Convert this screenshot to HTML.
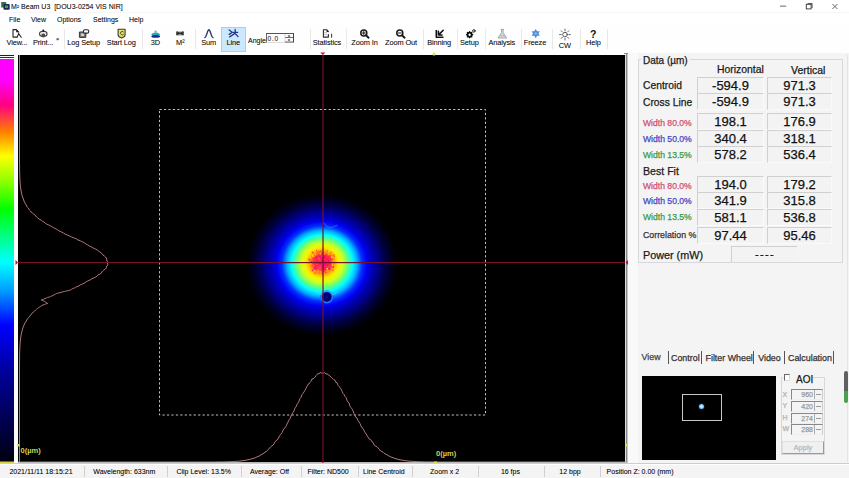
<!DOCTYPE html>
<html><head><meta charset="utf-8">
<style>
*{margin:0;padding:0;box-sizing:border-box}
html,body{width:849px;height:478px;overflow:hidden;background:#f0f0f0;font-family:"Liberation Sans",sans-serif;color:#222}
.a{position:absolute;white-space:pre;line-height:1}
#title{position:absolute;left:0;top:0;width:849px;height:13px;background:#fff}
#menu{position:absolute;left:0;top:13px;width:849px;height:13px;background:#fff}
#tool{position:absolute;left:0;top:26px;width:849px;height:29px;background:#fefefe}
.t7{font-size:7px;color:#1a1a1a;text-shadow:0 0 .3px rgba(0,0,0,.35)}
.lb{width:60px;text-align:center;font-size:7.4px;letter-spacing:-.12px}
.sep{position:absolute;width:1px;background:#e8e8e8}
#view{position:absolute;left:18px;top:55px;width:609px;height:407px;background:#000}
#right .a,#right .vb{-webkit-text-stroke:.25px currentColor}
#rbg{position:absolute;left:627.5px;top:53px;width:221.5px;height:410px;background:linear-gradient(90deg,#f9f9f9 0,#f9f9f9 9.5px,#f4f4f4 9.5px)}
.pb{position:absolute;border-left:1px solid #dadada;border-right:1px solid #e8e8e8}
.gb{position:absolute;border:1px solid #d8d8d8}
.vb{position:absolute;border-top:1px solid #d0d0d0;border-left:1px solid #d0d0d0;border-right:1px solid #fafafa;border-bottom:1px solid #fafafa;font-size:13px;color:#111;text-align:center;line-height:16.5px;background:#f3f3f3}
#status{position:absolute;left:0;top:463px;width:849px;height:15px;background:#f4f4f4;border-top:1px solid #cdcdcd;box-shadow:inset 0 1px 0 #fff}
</style></head><body>
<div id="title">
  <div class="a t7" style="left:11px;top:3px">M² Beam U3  [DOU3-0254 VIS NIR]</div>
  <svg style="position:absolute;left:0;top:0" width="849" height="13" viewBox="0 0 849 13">
    <rect x="1.2" y="2" width="5" height="5.5" fill="#3a6a50"/>
    <rect x="3.5" y="4" width="6.2" height="5.8" rx="1" fill="#1a2a50"/>
    <rect x="5" y="5.5" width="3" height="2.5" fill="#40a060"/>
    <rect x="780" y="5.7" width="6.2" height=".8" fill="#444"/>
    <rect x="806.3" y="4.3" width="4.8" height="4.6" fill="none" stroke="#333" stroke-width=".9"/>
    <path d="M807.6 3.5h4.5v4.6" fill="none" stroke="#333" stroke-width=".8"/>
    <path d="M832.4 4l5 5M837.4 4l-5 5" stroke="#444" stroke-width=".8"/>
    <rect x="0" y="12.3" width="849" height=".7" fill="#f2f2f2"/>
  </svg>
</div>
<div id="menu">
  <div class="a t7" style="left:9px;top:3px">File</div>
  <div class="a t7" style="left:31px;top:3px">View</div>
  <div class="a t7" style="left:57px;top:3px">Options</div>
  <div class="a t7" style="left:93px;top:3px">Settings</div>
  <div class="a t7" style="left:129px;top:3px">Help</div>
</div>
<div id="tool">
<div style="position:absolute;left:221px;top:1px;width:25px;height:25px;background:#cce8ff;border:1px solid #99d1ff"></div>
<div class="a t7 lb" style="margin-top:.3px;left:-13.1px;top:13px">View...</div>
<div class="a t7 lb" style="margin-top:.3px;left:13.1px;top:13px">Print...</div>
<div class="a t7 lb" style="margin-top:.3px;left:53.6px;top:13px">Log Setup</div>
<div class="a t7 lb" style="margin-top:.3px;left:91.3px;top:13px">Start Log</div>
<div class="a t7 lb" style="margin-top:.3px;left:125.3px;top:13px">3D</div>
<div class="a t7 lb" style="margin-top:.3px;left:150.3px;top:13px">M²</div>
<div class="a t7 lb" style="margin-top:.3px;left:178.6px;top:13px">Sum</div>
<div class="a t7 lb" style="margin-top:.3px;left:203.3px;top:13px">Line</div>
<div class="a t7 lb" style="margin-top:.3px;left:296.9px;top:13px">Statistics</div>
<div class="a t7 lb" style="margin-top:.3px;left:334.5px;top:13px">Zoom In</div>
<div class="a t7 lb" style="margin-top:.3px;left:371.0px;top:13px">Zoom Out</div>
<div class="a t7 lb" style="margin-top:.3px;left:409.1px;top:13px">Binning</div>
<div class="a t7 lb" style="margin-top:.3px;left:439.4px;top:13px">Setup</div>
<div class="a t7 lb" style="margin-top:.3px;left:471.8px;top:13px">Analysis</div>
<div class="a t7 lb" style="margin-top:.3px;left:505.0px;top:13px">Freeze</div>
<div class="a t7 lb" style="margin-top:.3px;left:563.3px;top:13px">Help</div>
<div class="a t7 lb" style="margin-top:.3px;left:534.9px;top:16px">CW</div>
<div class="a t7" style="left:248px;top:11px">Angle</div>
<div style="position:absolute;left:265.5px;top:7px;width:28.5px;height:9.5px;background:#fdfdfd;border-top:1px solid #555;border-left:1px solid #666;border-right:1px solid #444;border-bottom:1px solid #ddd"></div>
<div class="a t7" style="left:267.5px;top:10px;font-size:6.5px;letter-spacing:.8px;color:#333">0.0</div>
<svg style="position:absolute;left:284px;top:7px" width="10" height="10" viewBox="0 0 10 10"><path d="M1 4.5h8M1 9h8M5 2v2M5 6v2M3.8 3h2.4M3.8 7h2.4" stroke="#444" stroke-width=".8"/><path d="M1 1v8" stroke="#bbb" stroke-width=".6"/></svg>
<div class="sep" style="left:64px;top:3px;height:20px"></div>
<div class="sep" style="left:142px;top:3px;height:20px"></div>
<div class="sep" style="left:195px;top:3px;height:20px"></div>
<div class="sep" style="left:310px;top:3px;height:20px"></div>
<div class="sep" style="left:346px;top:3px;height:20px"></div>
<div class="sep" style="left:423px;top:3px;height:20px"></div>
<div class="sep" style="left:457px;top:3px;height:20px"></div>
<div class="sep" style="left:485px;top:3px;height:20px"></div>
<div class="sep" style="left:521px;top:3px;height:20px"></div>
<div class="sep" style="left:552px;top:3px;height:20px"></div>
<div class="sep" style="left:580px;top:3px;height:20px"></div>
<div class="sep" style="left:607px;top:3px;height:20px"></div>
</div>
<svg style="position:absolute;left:0;top:0" width="849" height="55" viewBox="0 0 849 55">
<g fill="none" stroke-linecap="round" stroke-linejoin="round">
<!-- View -->
<path d="M13 29.6h3.4l2.3 2.5M13 29.6v7.5h3.6" stroke="#222" stroke-width="1.1"/>
<path d="M16.2 29.7l2.5 2.6h-2.5z" fill="#111"/>
<path d="M17.1 37.3l1.5-3.7l2.6 3.7" stroke="#222" stroke-width="1.1"/>
<!-- Print -->
<rect x="39.6" y="31.5" width="7.4" height="4.6" rx="2.2" stroke="#3a3a3a" stroke-width="1.1" fill="#fff"/>
<circle cx="43.3" cy="30.5" r="1.1" fill="#1a1a1a"/>
<circle cx="43.3" cy="35.4" r="2" fill="#4a4a4a"/>
<path d="M41.2 33.2h4.2" stroke="#aaa" stroke-width=".8"/>
<!-- dropdown -->
<path d="M56.8 38.8h2l-1 1.2z" fill="#222" stroke="#222" stroke-width=".5"/>
<!-- Log setup -->
<rect x="79.8" y="32" width="6" height="5.4" fill="#7a7a7a" stroke="#333" stroke-width="1"/>
<rect x="81.2" y="33.6" width="2.6" height="2.4" fill="#ddd"/>
<rect x="83.5" y="29.7" width="5.2" height="3.4" rx="1.4" fill="#fff" stroke="#2a2a2a" stroke-width="1.1"/>
<!-- Start log -->
<path d="M118.1 29.3h7v5.6q0 1.8-3.5 3q-3.5-1.2-3.5-3z" fill="#e6e46a" stroke="#3a3a30" stroke-width="1.1"/>
<path d="M123.3 31.8q-1.3-1-2.4.2q-1 1.4.3 2.6q1.2.9 2.3-.2" stroke="#3a3a2a" stroke-width=".9"/>
<!-- 3D -->
<path d="M155.7 30l2.2 2.8h-4.4z" fill="#7ac8a0"/>
<ellipse cx="155.7" cy="34.3" rx="4.2" ry="1.6" fill="#27a5c8"/>
<ellipse cx="155.7" cy="36.4" rx="4.4" ry="1.4" fill="#1b2f80"/>
<!-- M2 -->
<path d="M176.8 32.2v2.6l3.2-1.3zM183.2 32.2v2.6l-3.2-1.3z" fill="#2a2a2a" stroke="#2a2a2a" stroke-width="1"/>
<path d="M176.6 32.1h6.8M176.6 34.9h6.8" stroke="#444" stroke-width=".7"/>
<!-- Sum -->
<path d="M204.8 37.6c1.8-.3 2.6-7.9 4.1-7.9s2.3 7.6 4.1 7.9" stroke="#2b3470" stroke-width="1.4"/>
<!-- Line -->
<path d="M229.2 29.9l3.3 2.5h5.1M235.2 29.4v4M229.6 36.9l5.4-3.5l3 3.1M229.1 34.4l2.4-1.5" stroke="#263a8a" stroke-width="1.3"/>
<!-- Statistics -->
<path d="M328.4 34.5v2.6h-5v-7.4h3.2l1.8 1.9" stroke="#2a2a2a" stroke-width="1.1"/>
<path d="M326.6 29.8l1.9 2.1h-1.9z" fill="#111"/>
<path d="M324.6 32.6h2.2M324.6 34.6h2.6" stroke="#aaa" stroke-width=".8"/>
<path d="M331.6 37.3v-3.2" stroke="#444" stroke-width="1.1"/>
<!-- Zoom in/out -->
<circle cx="363.8" cy="33" r="3" stroke="#1a1a1a" stroke-width="1.5"/>
<path d="M362.3 33h3M363.8 31.5v3" stroke="#1a1a1a" stroke-width="1"/>
<path d="M366 35.3l2.6 2.4" stroke="#1a1a1a" stroke-width="1.9"/>
<circle cx="399.8" cy="33" r="3" stroke="#1a1a1a" stroke-width="1.5"/>
<path d="M398.3 33h3" stroke="#1a1a1a" stroke-width="1"/>
<path d="M402 35.3l2.6 2.4" stroke="#1a1a1a" stroke-width="1.9"/>
<!-- Binning -->
<path d="M436.3 30v7.3h7.2" stroke="#111" stroke-width="1.6" stroke-linecap="butt"/>
<path d="M443.2 30.3l-4.4 4.3M438.4 31.4v3.6h3.6" stroke="#111" stroke-width="1.6"/>
<!-- Setup -->
<circle cx="469.6" cy="34.7" r="2.1" stroke="#111" stroke-width="1.8" fill="#fff"/>
<path d="M469.6 31.6v1M469.6 36.8v1M466.5 34.7h1M471.7 34.7h1M467.4 32.5l.7.7M471.1 36.2l.7.7M471.8 32.5l-.7.7M468.1 36.2l-.7.7" stroke="#111" stroke-width="1.3"/>
<circle cx="473.9" cy="30.9" r="1.25" stroke="#222" stroke-width="1"/>
<!-- Analysis -->
<path d="M501 29.4h2.6M501.5 29.6v3l-3.5 5.4h8.6l-3.5-5.4v-3" stroke="#a8a8a8" stroke-width="1" fill="#d8d8d8"/>
<path d="M499.6 35.6h5.4" stroke="#bdbdbd" stroke-width="1.2"/>
<!-- Freeze -->
<path d="M535.7 28.9l1.35 2.35h2.7l-1.35 2.3l1.35 2.3h-2.7l-1.35 2.35l-1.35-2.35h-2.7l1.35-2.3l-1.35-2.3h2.7z" fill="#4d8bd6"/>
<circle cx="535.7" cy="33.55" r="1.3" fill="#8fb8ea"/>
<!-- CW -->
<circle cx="565" cy="34.6" r="2.3" stroke="#555" stroke-width="1"/>
<path d="M565 29.2v1.6M565 38.4v1.6M559.6 34.6h1.6M568.8 34.6h1.6M561.2 30.8l1.1 1.1M567.7 37.3l1.1 1.1M568.8 30.8l-1.1 1.1M562.3 37.3l-1.1 1.1" stroke="#666" stroke-width="1"/>
</g>
<text x="593.3" y="38" font-family="Liberation Sans" font-weight="bold" font-size="10.5" text-anchor="middle" fill="#111">?</text>
</svg>
<svg id="viewsvg" style="position:absolute;left:0;top:0" width="849" height="478" viewBox="0 0 849 478">
<defs>
<linearGradient id="cbar" x1="0" y1="0" x2="0" y2="1">
<stop offset="0" stop-color="#ff00ff"/>
<stop offset="0.052" stop-color="#ff00ff"/>
<stop offset="0.114" stop-color="#ff0080"/>
<stop offset="0.181" stop-color="#ff8000"/>
<stop offset="0.241" stop-color="#ffff00"/>
<stop offset="0.31" stop-color="#80ff00"/>
<stop offset="0.372" stop-color="#00ff00"/>
<stop offset="0.447" stop-color="#00ff90"/>
<stop offset="0.504" stop-color="#00ffff"/>
<stop offset="0.573" stop-color="#00a0ff"/>
<stop offset="0.66" stop-color="#0000ff"/>
<stop offset="0.77" stop-color="#0000a0"/>
<stop offset="0.923" stop-color="#000040"/>
<stop offset="1" stop-color="#000010"/>
</linearGradient>
<radialGradient id="beam" cx="322" cy="265" fx="322" fy="262" r="76" gradientUnits="userSpaceOnUse" gradientTransform="translate(0 265) scale(1 .94) translate(0 -265)">
<stop offset="0.000" stop-color="#ff1060"/>
<stop offset="0.066" stop-color="#ff1a58"/>
<stop offset="0.112" stop-color="#ff3040"/>
<stop offset="0.151" stop-color="#ff8a20"/>
<stop offset="0.191" stop-color="#ffd000"/>
<stop offset="0.224" stop-color="#f4f400"/>
<stop offset="0.276" stop-color="#d0ff20"/>
<stop offset="0.342" stop-color="#60ff80"/>
<stop offset="0.401" stop-color="#00ffff"/>
<stop offset="0.461" stop-color="#00b0ff"/>
<stop offset="0.526" stop-color="#0030ff"/>
<stop offset="0.592" stop-color="#0000f0"/>
<stop offset="0.658" stop-color="#0000b8"/>
<stop offset="0.737" stop-color="#000088"/>
<stop offset="0.816" stop-color="#000050"/>
<stop offset="0.908" stop-color="#000020"/>
<stop offset="1.000" stop-color="#000000"/>
</radialGradient>
<radialGradient id="hole" cx="326.8" cy="297" r="7.2" gradientUnits="userSpaceOnUse">
<stop offset="0" stop-color="#1010a0"/>
<stop offset="0.3" stop-color="#000070"/>
<stop offset="0.6" stop-color="#000080"/>
<stop offset="0.8" stop-color="#2050ff"/>
<stop offset="1" stop-color="#0030ff" stop-opacity="0"/>
</radialGradient>
</defs>
<rect x="0" y="53" width="18" height="410" fill="#fbfbfb"/>
<rect x="0" y="59" width="14" height="403" fill="url(#cbar)"/>
<rect x="0" y="55" width="14" height="1" fill="#101860"/>
<rect x="0" y="57" width="14" height="1" fill="#1c2a80"/>
<rect x="0" y="461.5" width="14" height="1.5" fill="#d8d040"/>
<rect x="18" y="55" width="607" height="407" fill="#000"/>
<rect x="244" y="190" width="156" height="150" fill="url(#beam)"/>
<rect x="327.1" y="255.7" width="1.5" height="1.5" fill="#ff0a50"/><rect x="311.7" y="251.6" width="1.5" height="1.5" fill="#ff3a40"/><rect x="328.4" y="261.3" width="1.5" height="1.5" fill="#ff0a50"/><rect x="316.2" y="257.3" width="1.5" height="1.5" fill="#ff0a50"/><rect x="321.0" y="274.4" width="1.5" height="1.5" fill="#ffa020"/><rect x="321.3" y="250.0" width="1" height="1" fill="#ff2a3a"/><rect x="316.2" y="256.6" width="1" height="1" fill="#ff0a50"/><rect x="314.1" y="255.6" width="1" height="1" fill="#ff6a20"/><rect x="318.5" y="260.7" width="1" height="1" fill="#ff2a60"/><rect x="318.7" y="270.5" width="1" height="1" fill="#ff9a10"/><rect x="325.5" y="254.5" width="1" height="1" fill="#ff2a3a"/><rect x="329.9" y="265.4" width="1.5" height="1.5" fill="#ff2a3a"/><rect x="320.5" y="270.6" width="1.5" height="1.5" fill="#ffe000"/><rect x="311.5" y="256.4" width="2" height="2" fill="#ffe000"/><rect x="321.6" y="274.0" width="1" height="1" fill="#ffe000"/><rect x="322.2" y="270.9" width="1" height="1" fill="#ff1a60"/><rect x="319.5" y="261.0" width="2" height="2" fill="#ff1a70"/><rect x="310.1" y="261.0" width="2" height="2" fill="#ff3a40"/><rect x="319.1" y="267.2" width="1.5" height="1.5" fill="#ff4a80"/><rect x="333.1" y="262.2" width="1.5" height="1.5" fill="#ff3a40"/><rect x="319.3" y="258.7" width="1" height="1" fill="#ff3a50"/><rect x="319.1" y="259.3" width="1.5" height="1.5" fill="#ff4a80"/><rect x="331.6" y="256.2" width="1" height="1" fill="#ff9a10"/><rect x="334.6" y="263.3" width="1" height="1" fill="#ffc000"/><rect x="316.8" y="265.9" width="1" height="1" fill="#ffa020"/><rect x="308.5" y="258.6" width="2" height="2" fill="#ff3a40"/><rect x="328.6" y="252.6" width="1.5" height="1.5" fill="#ffa020"/><rect x="311.7" y="257.7" width="1" height="1" fill="#ff6a20"/><rect x="327.3" y="271.4" width="1" height="1" fill="#ff9a10"/><rect x="323.1" y="263.9" width="1" height="1" fill="#ff0a50"/><rect x="318.5" y="260.1" width="1" height="1" fill="#e80060"/><rect x="326.9" y="250.5" width="1" height="1" fill="#ff3a40"/><rect x="323.5" y="268.7" width="1" height="1" fill="#ff1a60"/><rect x="313.3" y="253.0" width="1" height="1" fill="#ff3a40"/><rect x="322.6" y="256.8" width="1.5" height="1.5" fill="#e80060"/><rect x="317.3" y="267.8" width="1" height="1" fill="#e80060"/><rect x="313.2" y="270.5" width="1.5" height="1.5" fill="#ffa020"/><rect x="319.1" y="263.0" width="1.5" height="1.5" fill="#e80060"/><rect x="310.1" y="259.2" width="1" height="1" fill="#ff9a10"/><rect x="319.0" y="272.3" width="1" height="1" fill="#ff3a50"/><rect x="320.6" y="262.1" width="1" height="1" fill="#ff0090"/><rect x="327.3" y="270.9" width="1" height="1" fill="#ff9a10"/><rect x="328.6" y="267.8" width="2" height="2" fill="#ff0a70"/><rect x="312.9" y="253.1" width="1" height="1" fill="#ffc000"/><rect x="314.5" y="267.5" width="1" height="1" fill="#ff0a70"/><rect x="318.2" y="269.6" width="2" height="2" fill="#ff5a30"/><rect x="314.3" y="268.8" width="1" height="1" fill="#ff3a40"/><rect x="321.8" y="251.8" width="1" height="1" fill="#ffa020"/><rect x="317.4" y="269.1" width="1.5" height="1.5" fill="#ffe000"/><rect x="315.7" y="263.7" width="2" height="2" fill="#ff3a50"/><rect x="318.1" y="267.8" width="1" height="1" fill="#ff2a60"/><rect x="321.7" y="254.8" width="1" height="1" fill="#ff2a60"/><rect x="333.3" y="260.1" width="1" height="1" fill="#ffc000"/><rect x="328.0" y="260.1" width="1" height="1" fill="#e80060"/><rect x="318.1" y="257.0" width="1.5" height="1.5" fill="#ff2a3a"/><rect x="310.5" y="266.8" width="1" height="1" fill="#ff9a10"/><rect x="330.3" y="269.0" width="1" height="1" fill="#ff6a20"/><rect x="323.3" y="252.9" width="2" height="2" fill="#ff9a10"/><rect x="333.3" y="262.2" width="1.5" height="1.5" fill="#ff9a10"/><rect x="311.0" y="255.4" width="2" height="2" fill="#ff0a70"/><rect x="316.0" y="250.3" width="1" height="1" fill="#ff0a70"/><rect x="317.9" y="270.7" width="1" height="1" fill="#ff5a30"/><rect x="318.4" y="249.7" width="1.5" height="1.5" fill="#ff9a10"/><rect x="315.9" y="253.2" width="1.5" height="1.5" fill="#ff9a10"/><rect x="311.8" y="269.7" width="1.5" height="1.5" fill="#ff1a60"/><rect x="326.5" y="270.2" width="2" height="2" fill="#ff9a10"/><rect x="325.7" y="254.7" width="2" height="2" fill="#ff5a30"/><rect x="321.5" y="259.8" width="2" height="2" fill="#e80060"/><rect x="320.8" y="253.6" width="1.5" height="1.5" fill="#ff1a70"/><rect x="330.4" y="257.6" width="1.5" height="1.5" fill="#ffe000"/><rect x="321.1" y="272.9" width="1.5" height="1.5" fill="#ff6a20"/><rect x="310.9" y="255.9" width="2" height="2" fill="#ff3a40"/><rect x="322.4" y="258.2" width="1.5" height="1.5" fill="#ff2a3a"/><rect x="319.2" y="250.7" width="1.5" height="1.5" fill="#ff3a40"/><rect x="322.1" y="247.8" width="1.5" height="1.5" fill="#ff9a10"/><rect x="326.2" y="255.0" width="1.5" height="1.5" fill="#ff3a50"/><rect x="309.8" y="263.1" width="1.5" height="1.5" fill="#ffc000"/><rect x="319.3" y="268.6" width="1" height="1" fill="#ff4a80"/><rect x="313.9" y="270.4" width="1.5" height="1.5" fill="#ffc000"/><rect x="322.6" y="258.5" width="2" height="2" fill="#ff2a3a"/><rect x="312.9" y="252.5" width="1" height="1" fill="#ff6a20"/><rect x="327.3" y="264.8" width="1" height="1" fill="#ff2a60"/><rect x="323.5" y="252.8" width="1" height="1" fill="#ffa020"/><rect x="316.9" y="251.4" width="2" height="2" fill="#ff6a20"/><rect x="328.1" y="251.5" width="1" height="1" fill="#ffe000"/><rect x="308.9" y="257.3" width="1.5" height="1.5" fill="#ff9a10"/><rect x="330.7" y="265.5" width="1" height="1" fill="#ff3a40"/><rect x="321.8" y="273.7" width="1" height="1" fill="#ff6a20"/><rect x="316.2" y="253.0" width="1" height="1" fill="#ff3a40"/><rect x="317.7" y="266.6" width="1" height="1" fill="#ff4a80"/><rect x="322.9" y="262.1" width="2" height="2" fill="#ff0a50"/><rect x="321.9" y="252.3" width="1" height="1" fill="#ff1a70"/><rect x="315.7" y="265.0" width="1.5" height="1.5" fill="#ff0a70"/><rect x="323.0" y="254.0" width="1" height="1" fill="#ffa020"/><rect x="317.2" y="268.0" width="1.5" height="1.5" fill="#ff3a50"/><rect x="312.7" y="261.8" width="2" height="2" fill="#ff3a50"/><rect x="331.2" y="252.1" width="1" height="1" fill="#ff3a40"/><rect x="318.2" y="269.3" width="1" height="1" fill="#ff3a50"/><rect x="314.2" y="253.7" width="1.5" height="1.5" fill="#ffe000"/><rect x="331.3" y="265.2" width="1" height="1" fill="#ff3a50"/><rect x="321.9" y="263.0" width="1" height="1" fill="#ff4a80"/><rect x="331.7" y="255.1" width="1.5" height="1.5" fill="#ffe000"/><rect x="313.8" y="254.1" width="1" height="1" fill="#ff6a20"/><rect x="319.6" y="259.9" width="1" height="1" fill="#ff4a80"/><rect x="323.4" y="266.0" width="1" height="1" fill="#ff0a70"/><rect x="324.7" y="253.9" width="2" height="2" fill="#ff3a50"/><rect x="328.9" y="252.8" width="1.5" height="1.5" fill="#ff6a20"/><rect x="312.0" y="256.8" width="1.5" height="1.5" fill="#ff6a20"/><rect x="331.5" y="264.3" width="1.5" height="1.5" fill="#ffe000"/><rect x="330.3" y="262.3" width="2" height="2" fill="#ff3a40"/><rect x="331.0" y="257.4" width="2" height="2" fill="#ff3a40"/><rect x="318.7" y="258.5" width="1" height="1" fill="#ff1a70"/><rect x="326.2" y="266.5" width="1" height="1" fill="#ff2a60"/><rect x="320.9" y="252.4" width="1.5" height="1.5" fill="#ff1a60"/><rect x="318.4" y="258.8" width="1.5" height="1.5" fill="#ff4a80"/><rect x="330.2" y="258.1" width="1" height="1" fill="#ff0a70"/><rect x="322.5" y="261.6" width="2" height="2" fill="#ff0a70"/><rect x="319.5" y="265.2" width="2" height="2" fill="#ff0090"/><rect x="318.9" y="264.3" width="1.5" height="1.5" fill="#ff2a60"/><rect x="326.1" y="270.1" width="1.5" height="1.5" fill="#ff9a10"/><rect x="322.9" y="252.2" width="1.5" height="1.5" fill="#ff5a30"/><rect x="309.9" y="256.7" width="1.5" height="1.5" fill="#ffe000"/><rect x="322.3" y="263.2" width="1.5" height="1.5" fill="#ff1a70"/><rect x="315.0" y="267.9" width="1.5" height="1.5" fill="#ff2a3a"/><rect x="329.0" y="262.1" width="1" height="1" fill="#ffa020"/><rect x="326.3" y="267.8" width="1" height="1" fill="#ffa020"/><rect x="325.6" y="255.9" width="1.5" height="1.5" fill="#ff5a30"/><rect x="311.3" y="259.2" width="1.5" height="1.5" fill="#ff5a30"/><rect x="321.5" y="255.7" width="1" height="1" fill="#ffa020"/><rect x="310.0" y="264.2" width="1.5" height="1.5" fill="#ff9a10"/><rect x="332.0" y="262.4" width="1.5" height="1.5" fill="#ffa020"/><rect x="329.5" y="255.1" width="2" height="2" fill="#ff3a40"/><rect x="325.5" y="272.0" width="1" height="1" fill="#ff2a3a"/><rect x="319.2" y="255.8" width="2" height="2" fill="#ff0090"/><rect x="329.3" y="266.2" width="2" height="2" fill="#ff3a50"/><rect x="320.5" y="263.9" width="2" height="2" fill="#ff1a70"/><rect x="312.3" y="257.8" width="1.5" height="1.5" fill="#ff3a50"/><rect x="329.9" y="258.7" width="1.5" height="1.5" fill="#ff2a3a"/><rect x="314.4" y="272.7" width="1.5" height="1.5" fill="#ff2a3a"/><rect x="325.1" y="263.0" width="1.5" height="1.5" fill="#ff0090"/><rect x="332.5" y="254.2" width="2" height="2" fill="#ff6a20"/><rect x="330.9" y="256.2" width="2" height="2" fill="#ffc000"/><rect x="326.7" y="265.1" width="2" height="2" fill="#ff4a80"/><rect x="313.2" y="264.8" width="1" height="1" fill="#ff9a10"/><rect x="321.4" y="264.7" width="1" height="1" fill="#ff3a50"/><rect x="318.4" y="250.0" width="1" height="1" fill="#ff3a40"/><rect x="319.4" y="265.8" width="1.5" height="1.5" fill="#ff4a80"/><rect x="311.2" y="265.6" width="1.5" height="1.5" fill="#ff6a20"/><rect x="320.9" y="269.7" width="1.5" height="1.5" fill="#ff2a3a"/><rect x="325.8" y="267.4" width="1" height="1" fill="#ff0a70"/><rect x="329.7" y="257.0" width="1" height="1" fill="#ff2a3a"/><rect x="330.3" y="251.7" width="1.5" height="1.5" fill="#ff9a10"/><rect x="333.5" y="255.6" width="1.5" height="1.5" fill="#ff6a20"/><rect x="326.6" y="266.5" width="1" height="1" fill="#ff4a80"/><rect x="315.6" y="263.5" width="1.5" height="1.5" fill="#ff2a3a"/><rect x="319.7" y="274.5" width="2" height="2" fill="#ffc000"/><rect x="314.8" y="272.8" width="1.5" height="1.5" fill="#ff9a10"/><rect x="317.4" y="270.9" width="1" height="1" fill="#ffe000"/><rect x="323.6" y="250.7" width="2" height="2" fill="#ff9a10"/><rect x="319.1" y="271.2" width="1.5" height="1.5" fill="#ff3a50"/><rect x="332.3" y="269.5" width="1.5" height="1.5" fill="#ff6a20"/><rect x="317.6" y="257.4" width="2" height="2" fill="#ff5a30"/><rect x="326.5" y="268.1" width="1.5" height="1.5" fill="#ffe000"/><rect x="316.0" y="264.4" width="1" height="1" fill="#ff5a30"/><rect x="324.6" y="268.7" width="1" height="1" fill="#ff2a3a"/><rect x="326.5" y="264.5" width="2" height="2" fill="#ff0a50"/><rect x="321.8" y="249.6" width="2" height="2" fill="#ff9a10"/><rect x="328.8" y="262.0" width="2" height="2" fill="#ff0a70"/><rect x="319.7" y="252.9" width="1.5" height="1.5" fill="#ffc000"/><rect x="331.3" y="263.0" width="1" height="1" fill="#ffc000"/><rect x="324.5" y="256.7" width="1" height="1" fill="#e80060"/><rect x="317.3" y="265.8" width="1.5" height="1.5" fill="#ff2a60"/><rect x="321.3" y="269.9" width="2" height="2" fill="#ff3a40"/><rect x="332.5" y="266.3" width="1.5" height="1.5" fill="#ff1a60"/><rect x="330.7" y="263.5" width="1" height="1" fill="#ff2a3a"/><rect x="324.0" y="267.8" width="1.5" height="1.5" fill="#ff0a50"/><rect x="324.4" y="255.6" width="1" height="1" fill="#ff0a70"/><rect x="324.7" y="255.4" width="2" height="2" fill="#ff0a70"/><rect x="322.2" y="271.5" width="1" height="1" fill="#ff1a60"/><rect x="323.1" y="263.6" width="2" height="2" fill="#ff0090"/><rect x="319.2" y="271.2" width="2" height="2" fill="#ff9a10"/><rect x="327.9" y="253.2" width="2" height="2" fill="#ff9a10"/><rect x="313.7" y="267.5" width="1.5" height="1.5" fill="#ff0a70"/><rect x="311.4" y="254.8" width="2" height="2" fill="#ffe000"/><rect x="324.1" y="261.5" width="1" height="1" fill="#ff0090"/><rect x="318.5" y="249.2" width="1.5" height="1.5" fill="#ffe000"/><rect x="315.3" y="265.3" width="1" height="1" fill="#ff2a60"/><rect x="318.1" y="263.5" width="1" height="1" fill="#ff2a60"/><rect x="315.7" y="265.2" width="1" height="1" fill="#ff0090"/>
<circle cx="326.8" cy="297" r="7.2" fill="url(#hole)"/>
<circle cx="326.8" cy="297" r="5.6" stroke="#3a90ff" stroke-width="1.2" fill="none" opacity=".7"/>
<path d="M321 295a6.2 6.2 0 0 1 11.6 0" stroke="#60e0ff" stroke-width="1.1" fill="none" opacity=".5"/>
<path d="M316 292.5q3 2 4.5 2M333.3 294.5q2-1 5-3" stroke="#60d8ff" stroke-width="1" fill="none" opacity=".5"/>
<path d="M323.5 222.5Q328 231 337.5 225" stroke="#5a8aff" stroke-width="1" fill="none" opacity=".55"/>
<rect x="159.5" y="109.5" width="326" height="305.5" fill="none" stroke="#c4c4c4" stroke-width="1" stroke-dasharray="2.2 2.25"/>
<path d="M19.5 55.0 L19.5 56.0 L19.5 57.0 L19.5 58.0 L19.5 59.0 L19.5 60.0 L19.5 61.0 L19.5 62.0 L19.5 63.0 L19.5 64.0 L19.5 65.0 L19.5 66.0 L19.5 67.0 L19.5 68.0 L19.5 69.0 L19.5 70.0 L19.5 71.0 L19.5 72.0 L19.5 73.0 L19.5 74.0 L19.5 75.0 L19.5 76.0 L19.5 77.0 L19.5 78.0 L19.5 79.0 L19.5 80.0 L19.5 81.0 L19.5 82.0 L19.5 83.0 L19.5 84.0 L19.5 85.0 L19.5 86.0 L19.5 87.0 L19.5 88.0 L19.5 89.0 L19.5 90.0 L19.5 91.0 L19.5 92.0 L19.5 93.0 L19.5 94.0 L19.5 95.0 L19.5 96.0 L19.5 97.0 L19.5 98.0 L19.5 99.0 L19.5 100.0 L19.5 101.0 L19.5 102.0 L19.5 103.0 L19.5 104.0 L19.5 105.0 L19.5 106.0 L19.5 107.0 L19.5 108.0 L19.5 109.0 L19.5 110.0 L19.5 111.0 L19.5 112.0 L19.5 113.0 L19.5 114.0 L19.5 115.0 L19.5 116.0 L19.5 117.0 L19.5 118.0 L19.5 119.0 L19.5 120.0 L19.5 121.0 L19.5 122.0 L19.5 123.0 L19.5 124.0 L19.5 125.0 L19.5 126.0 L19.5 127.0 L19.5 128.0 L19.5 129.0 L19.5 130.0 L19.5 131.0 L19.5 132.0 L19.5 133.0 L19.5 134.0 L19.5 135.0 L19.5 136.0 L19.5 137.0 L19.5 138.0 L19.5 139.0 L19.5 140.0 L19.5 141.0 L19.5 142.0 L19.5 143.0 L19.5 144.0 L19.5 145.0 L19.5 146.0 L19.5 147.0 L19.5 148.0 L19.5 149.0 L19.5 150.0 L19.5 151.0 L19.5 152.0 L19.5 153.0 L19.5 154.0 L19.5 155.0 L19.5 156.0 L19.5 157.0 L19.5 158.0 L19.5 159.0 L19.5 160.0 L19.5 161.0 L19.5 162.0 L19.5 163.0 L19.5 164.0 L19.6 165.0 L19.6 166.0 L19.6 167.0 L19.6 168.0 L19.6 169.0 L19.6 170.0 L19.6 171.0 L19.7 172.0 L19.7 173.0 L19.7 174.0 L19.7 175.0 L19.8 176.0 L19.8 177.0 L19.8 178.0 L19.9 179.0 L19.9 180.0 L20.0 181.0 L20.1 182.0 L20.1 183.0 L20.2 184.0 L20.3 185.0 L20.4 186.0 L20.5 187.0 L20.7 188.0 L20.8 189.0 L21.0 190.0 L21.1 191.0 L21.3 192.0 L21.5 193.0 L21.7 194.0 L22.0 195.0 L22.2 196.0 L22.7 197.0 L23.0 198.0 L23.3 199.0 L23.7 200.0 L24.0 201.0 L24.4 202.0 L25.0 203.0 L25.5 204.0 L26.3 205.0 L26.6 206.0 L27.2 207.0 L28.3 208.0 L28.9 209.0 L29.4 210.0 L30.5 211.0 L31.1 212.0 L32.4 213.0 L33.8 214.0 L34.8 215.0 L35.8 216.0 L36.5 217.0 L37.9 218.0 L39.0 219.0 L41.1 220.0 L42.2 221.0 L44.0 222.0 L45.0 223.0 L46.5 224.0 L48.9 225.0 L50.8 226.0 L52.4 227.0 L54.2 228.0 L56.1 229.0 L57.9 230.0 L59.2 231.0 L61.6 232.0 L63.4 233.0 L65.0 234.0 L67.1 235.0 L69.5 236.0 L71.5 237.0 L74.2 238.0 L76.6 239.0 L78.0 240.0 L80.7 241.0 L82.8 242.0 L84.7 243.0 L86.0 244.0 L87.8 245.0 L89.6 246.0 L91.4 247.0 L93.2 248.0 L95.3 249.0 L97.3 250.0 L98.7 251.0 L99.7 252.0 L101.2 253.0 L102.5 254.0 L102.8 255.0 L104.4 256.0 L105.6 257.0 L106.2 258.0 L106.7 259.0 L106.9 260.0 L106.8 261.0 L107.8 262.0 L107.3 263.0 L107.8 264.0 L107.8 265.0 L106.8 266.0 L106.3 267.0 L106.4 268.0 L105.4 269.0 L103.9 270.0 L102.8 271.0 L101.8 272.0 L101.5 273.0 L100.0 274.0 L97.9 275.0 L97.2 276.0 L95.8 277.0 L93.7 278.0 L91.6 279.0 L90.0 280.0 L87.7 281.0 L85.6 282.0 L84.8 283.0 L82.4 284.0 L80.2 285.0 L78.6 286.0 L75.9 287.0 L75.4 287.5 L74.3 288.0 L72.8 288.5 L72.0 289.0 L71.3 289.5 L70.4 290.0 L68.8 290.5 L66.4 291.0 L64.5 291.5 L62.2 292.0 L61.1 292.5 L58.4 293.0 L56.5 293.5 L55.6 294.0 L55.0 294.5 L53.4 295.0 L53.1 295.5 L51.6 296.0 L50.7 296.5 L49.3 297.0 L47.4 297.5 L46.7 298.0 L45.1 298.5 L43.6 299.0 L43.3 299.5 L41.3 300.0 L42.7 300.5 L44.0 301.0 L44.8 301.5 L45.6 302.0 L46.4 302.5 L46.9 303.0 L47.8 303.5 L45.5 304.0 L44.6 304.5 L42.9 305.0 L41.9 305.5 L41.6 306.0 L40.3 306.5 L39.4 307.0 L39.0 307.5 L38.5 308.0 L37.4 308.5 L36.9 309.0 L36.2 309.5 L35.6 310.0 L34.6 311.0 L33.3 312.0 L32.4 313.0 L31.4 314.0 L30.8 315.0 L29.8 316.0 L29.1 317.0 L28.3 318.0 L27.3 319.0 L26.8 320.0 L26.3 321.0 L25.7 322.0 L24.9 323.0 L24.4 324.0 L24.1 325.0 L23.6 326.0 L23.2 327.0 L22.8 328.0 L22.6 329.0 L22.3 330.0 L22.1 331.0 L21.7 332.0 L21.6 333.0 L21.3 334.0 L21.1 335.0 L21.0 336.0 L20.8 337.0 L20.6 338.0 L20.6 339.0 L20.4 340.0 L20.3 341.0 L20.2 342.0 L20.2 343.0 L20.1 344.0 L20.0 345.0 L19.9 346.0 L19.9 347.0 L19.8 348.0 L19.8 349.0 L19.8 350.0 L19.7 351.0 L19.7 352.0 L19.7 353.0 L19.6 354.0 L19.6 355.0 L19.6 356.0 L19.6 357.0 L19.6 358.0 L19.6 359.0 L19.6 360.0 L19.6 361.0 L19.5 362.0 L19.5 363.0 L19.5 364.0 L19.5 365.0 L19.5 366.0 L19.5 367.0 L19.5 368.0 L19.5 369.0 L19.5 370.0 L19.5 371.0 L19.5 372.0 L19.5 373.0 L19.5 374.0 L19.5 375.0 L19.5 376.0 L19.5 377.0 L19.5 378.0 L19.5 379.0 L19.5 380.0 L19.5 381.0 L19.5 382.0 L19.5 383.0 L19.5 384.0 L19.5 385.0 L19.5 386.0 L19.5 387.0 L19.5 388.0 L19.5 389.0 L19.5 390.0 L19.5 391.0 L19.5 392.0 L19.5 393.0 L19.5 394.0 L19.5 395.0 L19.5 396.0 L19.5 397.0 L19.5 398.0 L19.5 399.0 L19.5 400.0 L19.5 401.0 L19.5 402.0 L19.5 403.0 L19.5 404.0 L19.5 405.0 L19.5 406.0 L19.5 407.0 L19.5 408.0 L19.5 409.0 L19.5 410.0 L19.5 411.0 L19.5 412.0 L19.5 413.0 L19.5 414.0 L19.5 415.0 L19.5 416.0 L19.5 417.0 L19.5 418.0 L19.5 419.0 L19.5 420.0 L19.5 421.0 L19.5 422.0 L19.5 423.0 L19.5 424.0 L19.5 425.0 L19.5 426.0 L19.5 427.0 L19.5 428.0 L19.5 429.0 L19.5 430.0 L19.5 431.0 L19.5 432.0 L19.5 433.0 L19.5 434.0 L19.5 435.0 L19.5 436.0 L19.5 437.0 L19.5 438.0 L19.5 439.0 L19.5 440.0 L19.5 441.0 L19.5 442.0 L19.5 443.0 L19.5 444.0 L19.5 445.0 L19.5 446.0 L19.5 447.0 L19.5 448.0 L19.5 449.0 L19.5 450.0 L19.5 451.0 L19.5 452.0 L19.5 453.0 L19.5 454.0 L19.5 455.0 L19.5 456.0 L19.5 457.0 L19.5 458.0 L19.5 459.0 L19.5 460.0 L19.5 461.0 L19.5 462.0" fill="none" stroke="#b07878" stroke-width="1"/>
<path d="M18.0 462.0 L19.0 462.0 L20.0 462.0 L21.0 462.0 L22.0 462.0 L23.0 462.0 L24.0 462.0 L25.0 462.0 L26.0 462.0 L27.0 462.0 L28.0 462.0 L29.0 462.0 L30.0 462.0 L31.0 462.0 L32.0 462.0 L33.0 462.0 L34.0 462.0 L35.0 462.0 L36.0 462.0 L37.0 462.0 L38.0 462.0 L39.0 462.0 L40.0 462.0 L41.0 462.0 L42.0 462.0 L43.0 462.0 L44.0 462.0 L45.0 462.0 L46.0 462.0 L47.0 462.0 L48.0 462.0 L49.0 462.0 L50.0 462.0 L51.0 462.0 L52.0 462.0 L53.0 462.0 L54.0 462.0 L55.0 462.0 L56.0 462.0 L57.0 462.0 L58.0 462.0 L59.0 462.0 L60.0 462.0 L61.0 462.0 L62.0 462.0 L63.0 462.0 L64.0 462.0 L65.0 462.0 L66.0 462.0 L67.0 462.0 L68.0 462.0 L69.0 462.0 L70.0 462.0 L71.0 462.0 L72.0 462.0 L73.0 462.0 L74.0 462.0 L75.0 462.0 L76.0 462.0 L77.0 462.0 L78.0 462.0 L79.0 462.0 L80.0 462.0 L81.0 462.0 L82.0 462.0 L83.0 462.0 L84.0 462.0 L85.0 462.0 L86.0 462.0 L87.0 462.0 L88.0 462.0 L89.0 462.0 L90.0 462.0 L91.0 462.0 L92.0 462.0 L93.0 462.0 L94.0 462.0 L95.0 462.0 L96.0 462.0 L97.0 462.0 L98.0 462.0 L99.0 462.0 L100.0 462.0 L101.0 462.0 L102.0 462.0 L103.0 462.0 L104.0 462.0 L105.0 462.0 L106.0 462.0 L107.0 462.0 L108.0 462.0 L109.0 462.0 L110.0 462.0 L111.0 462.0 L112.0 462.0 L113.0 462.0 L114.0 462.0 L115.0 462.0 L116.0 462.0 L117.0 462.0 L118.0 462.0 L119.0 462.0 L120.0 462.0 L121.0 462.0 L122.0 462.0 L123.0 462.0 L124.0 462.0 L125.0 462.0 L126.0 462.0 L127.0 462.0 L128.0 462.0 L129.0 462.0 L130.0 462.0 L131.0 462.0 L132.0 462.0 L133.0 462.0 L134.0 462.0 L135.0 462.0 L136.0 462.0 L137.0 462.0 L138.0 462.0 L139.0 462.0 L140.0 462.0 L141.0 462.0 L142.0 462.0 L143.0 462.0 L144.0 462.0 L145.0 462.0 L146.0 462.0 L147.0 462.0 L148.0 462.0 L149.0 462.0 L150.0 462.0 L151.0 462.0 L152.0 462.0 L153.0 462.0 L154.0 462.0 L155.0 462.0 L156.0 462.0 L157.0 462.0 L158.0 462.0 L159.0 462.0 L160.0 462.0 L161.0 462.0 L162.0 462.0 L163.0 462.0 L164.0 462.0 L165.0 462.0 L166.0 462.0 L167.0 462.0 L168.0 462.0 L169.0 462.0 L170.0 462.0 L171.0 462.0 L172.0 462.0 L173.0 462.0 L174.0 462.0 L175.0 462.0 L176.0 462.0 L177.0 462.0 L178.0 462.0 L179.0 462.0 L180.0 462.0 L181.0 462.0 L182.0 462.0 L183.0 462.0 L184.0 462.0 L185.0 462.0 L186.0 462.0 L187.0 462.0 L188.0 462.0 L189.0 462.0 L190.0 462.0 L191.0 462.0 L192.0 462.0 L193.0 462.0 L194.0 462.0 L195.0 462.0 L196.0 462.0 L197.0 462.0 L198.0 462.0 L199.0 462.0 L200.0 462.0 L201.0 462.0 L202.0 462.0 L203.0 462.0 L204.0 462.0 L205.0 462.0 L206.0 462.0 L207.0 462.0 L208.0 462.0 L209.0 462.0 L210.0 462.0 L211.0 462.0 L212.0 462.0 L213.0 462.0 L214.0 462.0 L215.0 462.0 L216.0 462.0 L217.0 461.9 L218.0 461.9 L219.0 461.9 L220.0 461.9 L221.0 461.9 L222.0 461.9 L223.0 461.9 L224.0 461.9 L225.0 461.8 L226.0 461.8 L227.0 461.8 L228.0 461.8 L229.0 461.7 L230.0 461.7 L231.0 461.7 L232.0 461.6 L233.0 461.6 L234.0 461.5 L235.0 461.4 L236.0 461.4 L237.0 461.3 L238.0 461.2 L239.0 461.2 L240.0 461.1 L241.0 460.9 L242.0 460.8 L243.0 460.6 L244.0 460.5 L245.0 460.4 L246.0 460.2 L247.0 460.0 L248.0 459.8 L249.0 459.6 L250.0 459.3 L251.0 459.1 L252.0 458.7 L253.0 458.4 L254.0 458.2 L255.0 457.9 L256.0 457.4 L257.0 456.9 L258.0 456.4 L259.0 456.1 L260.0 455.6 L261.0 454.9 L262.0 454.2 L263.0 453.7 L264.0 453.1 L265.0 452.2 L266.0 451.8 L267.0 450.8 L268.0 449.8 L269.0 448.4 L270.0 447.8 L271.0 446.5 L272.0 445.9 L273.0 445.1 L274.0 443.9 L275.0 441.7 L276.0 440.8 L277.0 440.0 L278.0 439.1 L279.0 437.0 L280.0 435.2 L281.0 434.1 L282.0 432.7 L283.0 430.5 L284.0 428.5 L285.0 427.8 L286.0 426.3 L287.0 424.1 L288.0 422.1 L289.0 419.9 L290.0 418.7 L291.0 416.0 L292.0 414.1 L293.0 412.5 L294.0 411.0 L295.0 407.9 L296.0 406.9 L297.0 404.2 L298.0 403.1 L299.0 401.2 L300.0 398.5 L301.0 397.3 L302.0 394.5 L303.0 393.3 L304.0 392.0 L305.0 390.2 L306.0 388.3 L307.0 386.3 L308.0 384.4 L309.0 384.0 L310.0 382.3 L311.0 381.2 L312.0 378.9 L313.0 379.0 L314.0 378.1 L315.0 377.1 L316.0 375.8 L317.0 374.4 L318.0 373.8 L319.0 373.5 L320.0 372.8 L321.0 372.6 L322.0 373.3 L323.0 373.4 L324.0 372.5 L325.0 372.9 L326.0 374.2 L327.0 373.7 L328.0 374.6 L329.0 375.3 L330.0 376.0 L331.0 377.1 L332.0 378.2 L333.0 378.8 L334.0 379.8 L335.0 380.2 L336.0 382.6 L337.0 382.7 L338.0 385.2 L339.0 386.5 L340.0 387.4 L341.0 389.0 L342.0 391.2 L343.0 393.4 L344.0 394.5 L345.0 396.5 L346.0 397.5 L347.0 400.4 L348.0 402.0 L349.0 403.1 L350.0 406.2 L351.0 407.6 L352.0 408.9 L353.0 410.9 L354.0 413.8 L355.0 415.6 L356.0 417.5 L357.0 418.1 L358.0 420.8 L359.0 421.9 L360.0 423.5 L361.0 426.0 L362.0 427.8 L363.0 428.4 L364.0 430.5 L365.0 432.6 L366.0 433.5 L367.0 435.5 L368.0 437.0 L369.0 438.8 L370.0 439.1 L371.0 440.1 L372.0 441.8 L373.0 442.5 L374.0 444.9 L375.0 445.7 L376.0 446.4 L377.0 446.9 L378.0 447.9 L379.0 449.4 L380.0 450.3 L381.0 451.0 L382.0 451.7 L383.0 452.2 L384.0 453.3 L385.0 453.6 L386.0 454.3 L387.0 454.8 L388.0 455.4 L389.0 456.0 L390.0 456.5 L391.0 457.0 L392.0 457.4 L393.0 457.6 L394.0 458.2 L395.0 458.5 L396.0 458.7 L397.0 459.1 L398.0 459.3 L399.0 459.6 L400.0 459.7 L401.0 460.0 L402.0 460.1 L403.0 460.3 L404.0 460.4 L405.0 460.6 L406.0 460.8 L407.0 460.9 L408.0 461.0 L409.0 461.1 L410.0 461.2 L411.0 461.3 L412.0 461.3 L413.0 461.4 L414.0 461.5 L415.0 461.5 L416.0 461.6 L417.0 461.6 L418.0 461.7 L419.0 461.7 L420.0 461.7 L421.0 461.8 L422.0 461.8 L423.0 461.8 L424.0 461.8 L425.0 461.9 L426.0 461.9 L427.0 461.9 L428.0 461.9 L429.0 461.9 L430.0 461.9 L431.0 461.9 L432.0 461.9 L433.0 461.9 L434.0 462.0 L435.0 462.0 L436.0 462.0 L437.0 462.0 L438.0 462.0 L439.0 462.0 L440.0 462.0 L441.0 462.0 L442.0 462.0 L443.0 462.0 L444.0 462.0 L445.0 462.0 L446.0 462.0 L447.0 462.0 L448.0 462.0 L449.0 462.0 L450.0 462.0 L451.0 462.0 L452.0 462.0 L453.0 462.0 L454.0 462.0 L455.0 462.0 L456.0 462.0 L457.0 462.0 L458.0 462.0 L459.0 462.0 L460.0 462.0 L461.0 462.0 L462.0 462.0 L463.0 462.0 L464.0 462.0 L465.0 462.0 L466.0 462.0 L467.0 462.0 L468.0 462.0 L469.0 462.0 L470.0 462.0 L471.0 462.0 L472.0 462.0 L473.0 462.0 L474.0 462.0 L475.0 462.0 L476.0 462.0 L477.0 462.0 L478.0 462.0 L479.0 462.0 L480.0 462.0 L481.0 462.0 L482.0 462.0 L483.0 462.0 L484.0 462.0 L485.0 462.0 L486.0 462.0 L487.0 462.0 L488.0 462.0 L489.0 462.0 L490.0 462.0 L491.0 462.0 L492.0 462.0 L493.0 462.0 L494.0 462.0 L495.0 462.0 L496.0 462.0 L497.0 462.0 L498.0 462.0 L499.0 462.0 L500.0 462.0 L501.0 462.0 L502.0 462.0 L503.0 462.0 L504.0 462.0 L505.0 462.0 L506.0 462.0 L507.0 462.0 L508.0 462.0 L509.0 462.0 L510.0 462.0 L511.0 462.0 L512.0 462.0 L513.0 462.0 L514.0 462.0 L515.0 462.0 L516.0 462.0 L517.0 462.0 L518.0 462.0 L519.0 462.0 L520.0 462.0 L521.0 462.0 L522.0 462.0 L523.0 462.0 L524.0 462.0 L525.0 462.0 L526.0 462.0 L527.0 462.0 L528.0 462.0 L529.0 462.0 L530.0 462.0 L531.0 462.0 L532.0 462.0 L533.0 462.0 L534.0 462.0 L535.0 462.0 L536.0 462.0 L537.0 462.0 L538.0 462.0 L539.0 462.0 L540.0 462.0 L541.0 462.0 L542.0 462.0 L543.0 462.0 L544.0 462.0 L545.0 462.0 L546.0 462.0 L547.0 462.0 L548.0 462.0 L549.0 462.0 L550.0 462.0 L551.0 462.0 L552.0 462.0 L553.0 462.0 L554.0 462.0 L555.0 462.0 L556.0 462.0 L557.0 462.0 L558.0 462.0 L559.0 462.0 L560.0 462.0 L561.0 462.0 L562.0 462.0 L563.0 462.0 L564.0 462.0 L565.0 462.0 L566.0 462.0 L567.0 462.0 L568.0 462.0 L569.0 462.0 L570.0 462.0 L571.0 462.0 L572.0 462.0 L573.0 462.0 L574.0 462.0 L575.0 462.0 L576.0 462.0 L577.0 462.0 L578.0 462.0 L579.0 462.0 L580.0 462.0 L581.0 462.0 L582.0 462.0 L583.0 462.0 L584.0 462.0 L585.0 462.0 L586.0 462.0 L587.0 462.0 L588.0 462.0 L589.0 462.0 L590.0 462.0 L591.0 462.0 L592.0 462.0 L593.0 462.0 L594.0 462.0 L595.0 462.0 L596.0 462.0 L597.0 462.0 L598.0 462.0 L599.0 462.0 L600.0 462.0 L601.0 462.0 L602.0 462.0 L603.0 462.0 L604.0 462.0 L605.0 462.0 L606.0 462.0 L607.0 462.0 L608.0 462.0 L609.0 462.0 L610.0 462.0 L611.0 462.0 L612.0 462.0 L613.0 462.0 L614.0 462.0 L615.0 462.0 L616.0 462.0 L617.0 462.0 L618.0 462.0 L619.0 462.0 L620.0 462.0 L621.0 462.0 L622.0 462.0 L623.0 462.0 L624.0 462.0 L625.0 462.0" fill="none" stroke="#b07878" stroke-width="1"/>
<rect x="18" y="262" width="607" height="1.2" fill="#74122a"/>
<rect x="322.4" y="55" width="1.2" height="407" fill="#74122a"/>
<rect x="625.8" y="53" width="1.6" height="410" fill="#8a8a8a"/><rect x="624" y="53" width="5" height="1" fill="#8a8a8a"/>
<rect x="18" y="462" width="609" height="1.5" fill="#b8b8b8"/>
<text x="20.5" y="453" font-family="Liberation Sans" font-weight="bold" font-size="7.5" fill="#d0d050">0(µm)</text>
<text x="436" y="456" font-family="Liberation Sans" font-weight="bold" font-size="7.5" fill="#d0d050">0(µm)</text>
<path d="M322.8 55l-2.5-2.5h5z" fill="#c01030"/>
<path d="M322.8 462l-2.5 2h5z" fill="#c01030"/>
<path d="M18 262.6l-2.5-2.5v5z" fill="#c01030"/>
<path d="M625.5 262.6l2.5-2.5v5z" fill="#c01030"/>
<rect x="432.5" y="52.5" width="3" height="3" rx="1" fill="#e8e860"/>
<rect x="17" y="444" width="2.5" height="2.5" fill="#e0e040"/>
<rect x="625" y="444" width="2.5" height="2.5" fill="#e0e040"/>
<rect x="434" y="461.5" width="3" height="2" fill="#e0e040"/>
</svg>
<div id="right">
<div id="rbg"></div>
<div style="position:absolute;left:847px;top:55px;width:1px;height:407px;background:#e4e4e4"></div>
<div class="gb" style="left:638px;top:59px;width:205px;height:203.5px"></div>
<div class="a" style="left:641px;top:55.5px;padding:0 2px;background:#f3f3f3;font-size:10px;color:#1a1a1a">Data (µm)</div>
<div class="a" style="left:717px;top:64.5px;font-size:10.4px;color:#1a1a1a">Horizontal</div>
<div class="a" style="left:791px;top:64.5px;font-size:10.5px;color:#1a1a1a">Vertical</div>
<div class="a" style="left:643px;top:81.4px;font-size:10.3px;color:#1a1a1a">Centroid</div>
<div class="vb" style="left:697px;top:76.5px;width:67px;height:17px">-594.9</div>
<div class="vb" style="left:767px;top:76.5px;width:65px;height:17px">971.3</div>
<div class="a" style="left:643px;top:98.3px;font-size:10.3px;color:#1a1a1a">Cross Line</div>
<div class="vb" style="left:697px;top:93.0px;width:67px;height:17px">-594.9</div>
<div class="vb" style="left:767px;top:93.0px;width:65px;height:17px">971.3</div>
<div class="a" style="left:643px;top:118.5px;font-size:8.6px;color:#d05070">Width 80.0%</div>
<div class="vb" style="left:697px;top:113.0px;width:67px;height:17px">198.1</div>
<div class="vb" style="left:767px;top:113.0px;width:65px;height:17px">176.9</div>
<div class="a" style="left:643px;top:134.9px;font-size:8.6px;color:#4848c0">Width 50.0%</div>
<div class="vb" style="left:697px;top:129.5px;width:67px;height:17px">340.4</div>
<div class="vb" style="left:767px;top:129.5px;width:65px;height:17px">318.1</div>
<div class="a" style="left:643px;top:150.9px;font-size:8.6px;color:#3a9a4a">Width 13.5%</div>
<div class="vb" style="left:697px;top:146.0px;width:67px;height:17px">578.2</div>
<div class="vb" style="left:767px;top:146.0px;width:65px;height:17px">536.4</div>
<div class="a" style="left:643px;top:181.5px;font-size:8.6px;color:#d05070">Width 80.0%</div>
<div class="vb" style="left:697px;top:176.0px;width:67px;height:17px">194.0</div>
<div class="vb" style="left:767px;top:176.0px;width:65px;height:17px">179.2</div>
<div class="a" style="left:643px;top:197.0px;font-size:8.6px;color:#4848c0">Width 50.0%</div>
<div class="vb" style="left:697px;top:191.5px;width:67px;height:17px">341.9</div>
<div class="vb" style="left:767px;top:191.5px;width:65px;height:17px">315.8</div>
<div class="a" style="left:643px;top:212.9px;font-size:8.6px;color:#3a9a4a">Width 13.5%</div>
<div class="vb" style="left:697px;top:208.7px;width:67px;height:17px">581.1</div>
<div class="vb" style="left:767px;top:208.7px;width:65px;height:17px">536.8</div>
<div class="a" style="left:643px;top:230.5px;font-size:8.8px;color:#333333">Correlation %</div>
<div class="vb" style="left:697px;top:227.1px;width:67px;height:17px">97.44</div>
<div class="vb" style="left:767px;top:227.1px;width:65px;height:17px">95.46</div>
<div class="a" style="left:643px;top:166px;font-size:10.6px;color:#1a1a1a">Best Fit</div>
<div class="a" style="left:643px;top:249.5px;font-size:10.8px;color:#1a1a1a">Power (mW)</div>
<div class="vb" style="left:731px;top:246px;width:66px;height:16px;font-size:11px;letter-spacing:1.3px;padding-left:1px;line-height:15px;border-bottom:none;border-right:none">----</div>
<div class="a" style="left:641.5px;top:353.1px;font-size:8.9px;color:#444">View</div>
<div class="a" style="left:671px;top:353.7px;font-size:8.9px;color:#333">Control</div>
<div class="a" style="left:705.5px;top:353.7px;font-size:8.9px;color:#333">Filter Wheel</div>
<div class="a" style="left:758.2px;top:353.7px;font-size:8.9px;color:#333">Video</div>
<div class="a" style="left:788px;top:353.7px;font-size:8.9px;color:#333">Calculation</div>
<div style="position:absolute;left:668.0px;top:350.5px;width:1px;height:13.5px;background:#555"></div>
<div style="position:absolute;left:701.1px;top:350.5px;width:1px;height:13.5px;background:#555"></div>
<div style="position:absolute;left:753.1px;top:350.5px;width:1px;height:13.5px;background:#555"></div>
<div style="position:absolute;left:783.5px;top:350.5px;width:1px;height:13.5px;background:#555"></div>
<div style="position:absolute;left:832.5px;top:350.5px;width:1px;height:13.5px;background:#555"></div>
<div style="position:absolute;left:641.5px;top:376px;width:134.5px;height:84px;background:#000"></div>
<div style="position:absolute;left:682px;top:394px;width:40px;height:27px;border:1px solid #c8c8c8"></div>
<div style="position:absolute;left:699px;top:404.3px;width:5px;height:5px;border-radius:50%;background:radial-gradient(#e0f4ff 0,#90d0ff 50%,#3a90e0 100%);box-shadow:0 0 1.5px #3a80ff"></div>
<div class="gb" style="left:780.5px;top:377px;width:44.5px;height:77.5px"></div>
<div style="position:absolute;left:783px;top:373px;width:30px;height:10px;background:#f3f3f3"></div>
<div style="position:absolute;left:784.3px;top:374.3px;width:6px;height:6.5px;background:#fff;border-top:1px solid #666;border-left:1px solid #666;border-right:1px solid #ddd;border-bottom:1px solid #ddd"></div>
<div class="a" style="left:796px;top:374.5px;font-size:10px;color:#1a1a1a">AOI</div>
<div class="a" style="left:782.5px;top:390.9px;font-size:7px;color:#b0b0b0">X</div>
<div style="position:absolute;left:791px;top:389px;width:32px;height:11px;border-top:1px solid #888;border-left:1px solid #888;border-right:1px solid #ccc;border-bottom:1px solid #eee;background:#f4f4f4"></div>
<div class="a" style="left:791px;top:391.3px;width:22px;text-align:right;font-size:7px;color:#999">960</div>
<div style="position:absolute;left:814px;top:390px;width:8px;height:9px;border-left:1px solid #aaa"></div>
<div style="position:absolute;left:816px;top:394px;width:5px;height:1px;background:#999"></div>
<div class="a" style="left:782.5px;top:401.6px;font-size:7px;color:#b0b0b0">Y</div>
<div style="position:absolute;left:791px;top:400.6px;width:32px;height:11px;border-top:1px solid #888;border-left:1px solid #888;border-right:1px solid #ccc;border-bottom:1px solid #eee;background:#f4f4f4"></div>
<div class="a" style="left:791px;top:402.9px;width:22px;text-align:right;font-size:7px;color:#999">420</div>
<div style="position:absolute;left:814px;top:401.6px;width:8px;height:9px;border-left:1px solid #aaa"></div>
<div style="position:absolute;left:816px;top:405.6px;width:5px;height:1px;background:#999"></div>
<div class="a" style="left:782.5px;top:413.7px;font-size:7px;color:#b0b0b0">H</div>
<div style="position:absolute;left:791px;top:412.7px;width:32px;height:11px;border-top:1px solid #888;border-left:1px solid #888;border-right:1px solid #ccc;border-bottom:1px solid #eee;background:#f4f4f4"></div>
<div class="a" style="left:791px;top:415.0px;width:22px;text-align:right;font-size:7px;color:#999">274</div>
<div style="position:absolute;left:814px;top:413.7px;width:8px;height:9px;border-left:1px solid #aaa"></div>
<div style="position:absolute;left:816px;top:417.7px;width:5px;height:1px;background:#999"></div>
<div class="a" style="left:782.5px;top:425.3px;font-size:7px;color:#b0b0b0">W</div>
<div style="position:absolute;left:791px;top:423.6px;width:32px;height:11px;border-top:1px solid #888;border-left:1px solid #888;border-right:1px solid #ccc;border-bottom:1px solid #eee;background:#f4f4f4"></div>
<div class="a" style="left:791px;top:425.9px;width:22px;text-align:right;font-size:7px;color:#999">288</div>
<div style="position:absolute;left:814px;top:424.6px;width:8px;height:9px;border-left:1px solid #aaa"></div>
<div style="position:absolute;left:816px;top:428.6px;width:5px;height:1px;background:#999"></div>
<div style="position:absolute;left:782px;top:441px;width:42px;height:12.5px;border:1px solid #e0e0e0;border-right-color:#999;border-bottom-color:#999;background:#f0f0f0"></div>
<div class="a" style="left:782px;top:444px;width:42px;text-align:center;font-size:7.5px;color:#b8b8b8">Apply</div>
<div style="position:absolute;left:843.5px;top:371px;width:4.5px;height:20px;background:#606060;border-radius:2px 2px 0 0"></div>
<div style="position:absolute;left:843.5px;top:390.5px;width:4.5px;height:12.5px;background:#4aa050;border-radius:0 0 2px 2px"></div>
</div>
<div id="status">
<div class="a t7" style="left:9.4px;top:4px;color:#111">2021/11/11 18:15:21</div>
<div class="a t7" style="left:93.3px;top:4px;color:#111">Wavelength: 633nm</div>
<div class="a t7" style="left:176.4px;top:4px;color:#111">Clip Level: 13.5%</div>
<div class="a t7" style="left:249.9px;top:4px;color:#111">Average: Off</div>
<div class="a t7" style="left:307.5px;top:4px;color:#111">Filter: ND500</div>
<div class="a t7" style="left:363.0px;top:4px;color:#111">Line Centroid</div>
<div class="a t7" style="left:430.0px;top:4px;color:#111">Zoom x 2</div>
<div class="a t7" style="left:500.9px;top:4px;color:#111">16 fps</div>
<div class="a t7" style="left:559.3px;top:4px;color:#111">12 bpp</div>
<div class="a t7" style="left:606.6px;top:4px;color:#111">Position Z: 0.00 (mm)</div>
<div style="position:absolute;left:83.9px;top:2px;width:1px;height:11px;background:#d0d0d0"></div>
<div style="position:absolute;left:167.0px;top:2px;width:1px;height:11px;background:#d0d0d0"></div>
<div style="position:absolute;left:241.4px;top:2px;width:1px;height:11px;background:#d0d0d0"></div>
<div style="position:absolute;left:300.8px;top:2px;width:1px;height:11px;background:#d0d0d0"></div>
<div style="position:absolute;left:357.5px;top:2px;width:1px;height:11px;background:#d0d0d0"></div>
<div style="position:absolute;left:412.1px;top:2px;width:1px;height:11px;background:#d0d0d0"></div>
<div style="position:absolute;left:478.3px;top:2px;width:1px;height:11px;background:#d0d0d0"></div>
<div style="position:absolute;left:544.2px;top:2px;width:1px;height:11px;background:#d0d0d0"></div>
<div style="position:absolute;left:599.8px;top:2px;width:1px;height:11px;background:#d0d0d0"></div>
</div>
</body></html>
